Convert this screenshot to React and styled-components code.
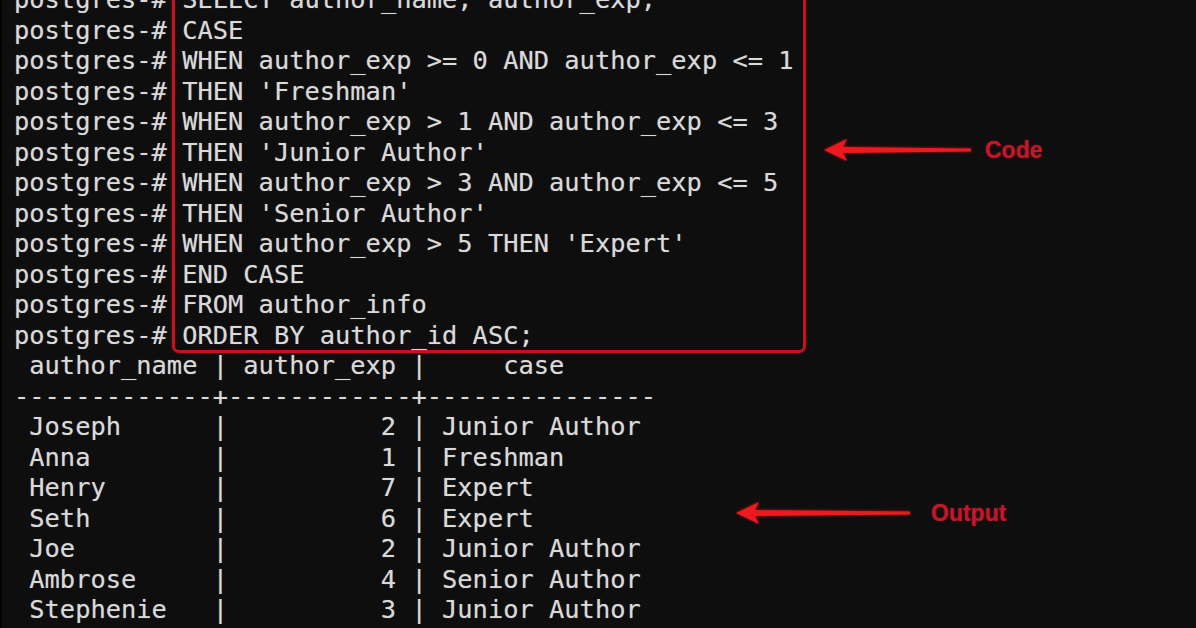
import React from 'react';
import styled, { createGlobalStyle } from 'styled-components';

const GlobalStyle = createGlobalStyle`
    html, body {
        margin: 0;
        padding: 0;
        background: #0e0e0e;
    }
`;

const Screen = styled.div`
    position: relative;
    width: 1196px;
    height: 628px;
    overflow: hidden;
    background: #0e0e0e;
    border-left: 2px solid #050505;
    box-sizing: border-box;
    font-family: "DejaVu Sans Mono", "Liberation Mono", monospace;
    font-size: 25.4px;
    line-height: 30.5px;
    color: #d9d9d9;
    text-shadow: 0 0 1px rgba(220, 220, 220, 0.45);
`;

const Scrollback = styled.div`
    margin-top: -16px;
    padding-left: 12px;
`;

const QueryBlock = styled.div`
    display: flex;
    align-items: flex-start;
`;

const Column = styled.div`
    display: flex;
    flex-direction: column;
`;

const Line = styled.div`
    white-space: pre;
    height: 30.5px;
`;

const CodeBox = styled.div`
    display: flex;
    flex-direction: column;
    box-sizing: border-box;
    width: 634px;
    margin: -3px 0 -3px 5px;
    padding-left: 7.3px;
    border: 3px solid #c3141d;
    border-radius: 0 0 7px 7px;
    box-shadow: 0 0 3px rgba(200, 20, 30, 0.5);
`;

const Note = styled.div`
    position: absolute;
    left: ${ props => props.x }px;
    top: ${ props => props.y }px;
    display: flex;
    align-items: center;
    gap: ${ props => props.gap }px;
`;

const NoteLabel = styled.span`
    font-family: "Liberation Sans", Arial, sans-serif;
    font-size: 23px;
    line-height: 24px;
    font-weight: 600;
    color: #c5162a;
    text-shadow: 0 0 2px rgba(200, 20, 40, 0.6);
`;

const Arrow = ({ length }) => (
    <svg width={ length } height="26" viewBox={ `0 0 ${ length } 26` } style={{ filter: 'drop-shadow(0 0 1.5px rgba(230,20,28,0.8))' }}>
        <polygon
            points={ `1,13 24,2 20,10 ${ length - 2 },11.5 ${ length - 2 },14.5 20,16 24,24` }
            fill="#ec1a1f"
        />
    </svg>
);

const prompts = Array.from({ length: 12 }, () => 'postgres-#');

const query = [
    'SELECT author_name, author_exp,',
    'CASE',
    'WHEN author_exp >= 0 AND author_exp <= 1',
    "THEN 'Freshman'",
    'WHEN author_exp > 1 AND author_exp <= 3',
    "THEN 'Junior Author'",
    'WHEN author_exp > 3 AND author_exp <= 5',
    "THEN 'Senior Author'",
    "WHEN author_exp > 5 THEN 'Expert'",
    'END CASE',
    'FROM author_info',
    'ORDER BY author_id ASC;',
];

const rows = [
    ['Joseph', 2, 'Junior Author'],
    ['Anna', 1, 'Freshman'],
    ['Henry', 7, 'Expert'],
    ['Seth', 6, 'Expert'],
    ['Joe', 2, 'Junior Author'],
    ['Ambrose', 4, 'Senior Author'],
    ['Stephenie', 3, 'Junior Author'],
    ['Maria', 5, 'Senior Author'],
];

const formatRow = ([name, exp, level]) =>
    ` ${ name.padEnd(11) } | ${ String(exp).padStart(10) } | ${ level }`;

const output = [
    ' author_name | author_exp |     case',
    '-------------+------------+---------------',
    ...rows.map(formatRow),
];

const App = () => (
    <>
        <GlobalStyle />
        <Screen>
            <Scrollback>
                <QueryBlock>
                    <Column>
                        { prompts.map((p, i) => <Line key={ i }>{ p }</Line>) }
                    </Column>
                    <CodeBox>
                        { query.map((q, i) => <Line key={ i }>{ q }</Line>) }
                    </CodeBox>
                </QueryBlock>
                <Column>
                    { output.map((o, i) => <Line key={ i }>{ o }</Line>) }
                </Column>
            </Scrollback>
            <Note x={ 821 } y={ 137 } gap={ 12 }>
                <Arrow length={ 150 } />
                <NoteLabel>Code</NoteLabel>
            </Note>
            <Note x={ 733 } y={ 500 } gap={ 19 }>
                <Arrow length={ 177 } />
                <NoteLabel>Output</NoteLabel>
            </Note>
        </Screen>
    </>
);

export default App;
